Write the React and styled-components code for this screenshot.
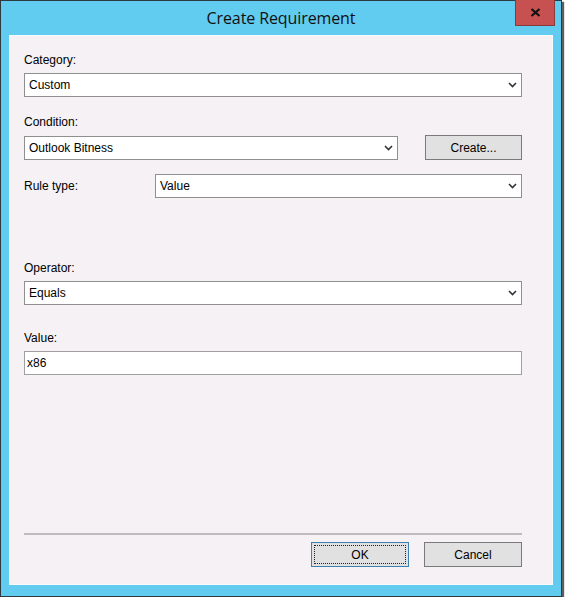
import React from 'react';
import styled, { createGlobalStyle } from 'styled-components';

const GlobalStyle = createGlobalStyle`
  html, body {
    margin: 0;
    padding: 0;
    background: #ffffff;
  }
  * {
    box-sizing: border-box;
  }
`;

const Window = styled.div`
  position: relative;
  display: flex;
  flex-direction: column;
  width: 562px;
  height: 597px;
  background: #62cbf0;
  border: 1px solid #2d3a40;
  box-shadow: 2px 2px 1px rgba(40, 40, 40, 0.75);
`;

const TitleBar = styled.div`
  display: flex;
  align-items: center;
  justify-content: center;
  height: 34px;
  flex-shrink: 0;
`;

const Title = styled.h1`
  margin: 0;
  font-family: 'Open Sans', 'Noto Sans', sans-serif;
  font-weight: 400;
  font-size: 16px;
  color: #111111;
  letter-spacing: -0.1px;
`;

const CloseButton = styled.button`
  position: absolute;
  top: -1px;
  right: 6px;
  width: 40px;
  height: 26px;
  display: flex;
  align-items: center;
  justify-content: center;
  background: #c75050;
  border: 1px solid #8a3a3a;
  border-top: none;
  padding: 0;
`;

const Client = styled.div`
  flex: 1;
  display: flex;
  flex-direction: column;
  margin: 0 8px 11px 8px;
  padding: 17px 30px 17px 14px;
  background: #f5f1f5;
  border: 1px solid #fbfafb;
  font-family: 'Liberation Sans', Arial, sans-serif;
  font-size: 12px;
  color: #000000;
`;

const Label = styled.div`
  height: 14px;
  line-height: 14px;
  margin-top: ${(p) => p.$top || 0}px;
  margin-bottom: 6px;
`;

const Row = styled.div`
  display: flex;
  align-items: center;
  margin-top: ${(p) => p.$top || 0}px;
`;

const RowLabel = styled.div`
  width: 131px;
  flex-shrink: 0;
`;

const Combo = styled.div`
  display: flex;
  align-items: center;
  justify-content: space-between;
  height: 24px;
  flex: 0 0 auto;
  width: ${(p) => (p.$width ? `${p.$width}px` : 'auto')};
  padding: 0 4px 0 4px;
  background: #ffffff;
  border: 1px solid #8f8f8f;
  ${Row} > & {
    flex: ${(p) => (p.$width ? '0 0 auto' : '1 1 auto')};
  }
`;

const TextBox = styled.div`
  display: flex;
  align-items: center;
  height: 24px;
  padding: 0 2px;
  background: #ffffff;
  border: 1px solid #a0a0a0;
`;

const Button = styled.button`
  width: 98px;
  height: 25px;
  margin-left: ${(p) => p.$left || 0}px;
  padding: 0;
  font-family: 'Liberation Sans', Arial, sans-serif;
  font-size: 12px;
  color: #000000;
  background: #e1e1e1;
  border: 1px solid ${(p) => (p.$default ? '#3c7fb1' : '#7a7a7a')};
  position: relative;
  &::after {
    content: '';
    display: ${(p) => (p.$default ? 'block' : 'none')};
    position: absolute;
    inset: 2px;
    border: 1px dotted #222222;
  }
`;

const Spacer = styled.div`
  flex: 1;
`;

const Separator = styled.div`
  height: 2px;
  background: #bfbbbf;
  margin-bottom: 7px;
`;

const Footer = styled.div`
  display: flex;
  justify-content: flex-end;
  gap: 15px;
`;

const Chevron = () => (
  <svg width="9" height="6" viewBox="0 0 9 6">
    <path d="M1 1 L4.5 4.5 L8 1" fill="none" stroke="#333" strokeWidth="1.6" />
  </svg>
);

const Select = ({ value, width }) => (
  <Combo $width={width}>
    <span>{value}</span>
    <Chevron />
  </Combo>
);

export default function App() {
  return (
    <>
      <GlobalStyle />
      <Window>
        <TitleBar>
          <Title>Create Requirement</Title>
        </TitleBar>
        <CloseButton aria-label="Close">
          <svg width="11" height="9" viewBox="0 0 11 9">
            <path d="M1.5 1 L9.5 8 M9.5 1 L1.5 8" stroke="#111" strokeWidth="2.2" />
          </svg>
        </CloseButton>
        <Client>
          <Label>Category:</Label>
          <Select value="Custom" />

          <Label $top={18}>Condition:</Label>
          <Row>
            <Select value="Outlook Bitness" width={374} />
            <Button $left={27}>Create...</Button>
          </Row>

          <Row $top={14}>
            <RowLabel>Rule type:</RowLabel>
            <Select value="Value" />
          </Row>

          <Label $top={63}>Operator:</Label>
          <Select value="Equals" />

          <Label $top={26}>Value:</Label>
          <TextBox>x86</TextBox>

          <Spacer />
          <Separator />
          <Footer>
            <Button $default>OK</Button>
            <Button>Cancel</Button>
          </Footer>
        </Client>
      </Window>
    </>
  );
}
